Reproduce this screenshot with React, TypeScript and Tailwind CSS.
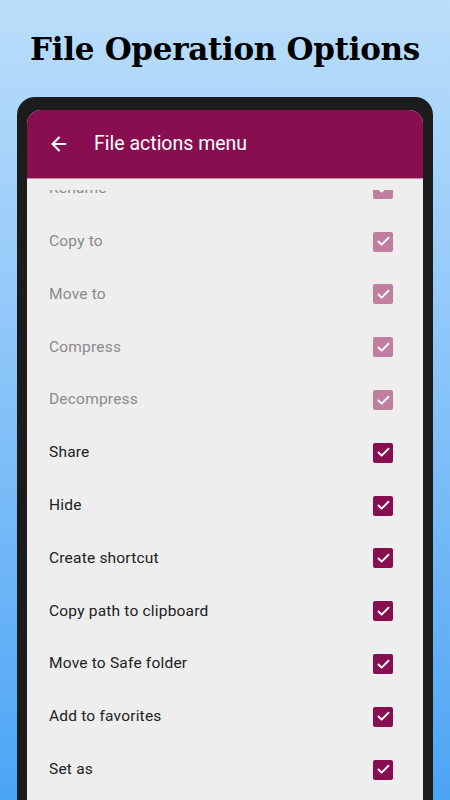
import { ArrowLeft, Check } from "lucide-react";

const items = [
  { label: "Rename", enabled: false },
  { label: "Copy to", enabled: false },
  { label: "Move to", enabled: false },
  { label: "Compress", enabled: false },
  { label: "Decompress", enabled: false },
  { label: "Share", enabled: true },
  { label: "Hide", enabled: true },
  { label: "Create shortcut", enabled: true },
  { label: "Copy path to clipboard", enabled: true },
  { label: "Move to Safe folder", enabled: true },
  { label: "Add to favorites", enabled: true },
  { label: "Set as", enabled: true },
];

const App = () => {
  return (
    <div className="w-[450px] h-[800px] overflow-hidden flex flex-col items-center bg-gradient-to-b from-[#bbdefa] to-[#4aa5f5] font-['Roboto',sans-serif]">
      {/* title */}
      <h1 className="mt-[26px] h-[46px] text-[31px] leading-[46px] font-bold text-black font-['DejaVu_Serif',serif] tracking-[-0.3px]">
        File Operation Options
      </h1>

      {/* phone frame */}
      <div className="mt-[25px] w-[416px] flex-1 bg-[#1c1c1c] rounded-t-[18px] pt-[13px] px-[10px] flex flex-col">
        <div className="flex-1 rounded-t-[14px] overflow-hidden flex flex-col bg-[#eeeeee]">
          {/* app bar */}
          <div className="h-[69px] shrink-0 bg-[#880e4f] flex items-center border-b border-[#c4889f]">
            <ArrowLeft className="ml-[21px] text-white" size={22} strokeWidth={2.2} />
            <span className="ml-[24px] text-white text-[19.5px]">File actions menu</span>
          </div>

          {/* list ===> scrolled a little, top edge clipped */}
          <div className="flex-1 pt-[11px] flex flex-col">
            <div className="flex-1 overflow-hidden">
              <div className="mt-[-27.5px] flex flex-col">
                {items.map((item) => (
                  <div key={item.label} className="h-[52.8px] shrink-0 flex items-center justify-between pl-[22px] pr-[30px]">
                    <span className={`text-[15.5px] tracking-[0.2px] ${item.enabled ? "text-[#212121]" : "text-[#8a8a8a]"}`}>
                      {item.label}
                    </span>
                    <div
                      className={`w-[20px] h-[20px] rounded-[2px] flex items-center justify-center ${
                        item.enabled ? "bg-[#880e4f]" : "bg-[#c17f9f]"
                      }`}
                    >
                      <Check className="text-white" size={15} strokeWidth={3} />
                    </div>
                  </div>
                ))}
              </div>
            </div>
          </div>
        </div>
      </div>
    </div>
  );
};

export default App;
